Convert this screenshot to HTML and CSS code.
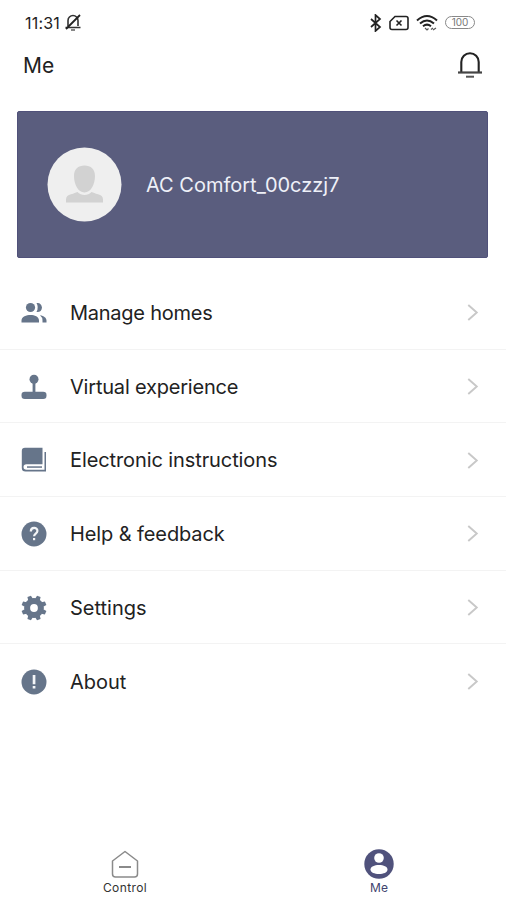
FILE: index.html
```html
<!DOCTYPE html>
<html lang="en">
<head>
<meta charset="utf-8">
<title>Me</title>
<link rel="stylesheet" href="styles.css">
</head>
<body>
<div class="screen">
  <div class="status">
    <span class="time">11:31</span>
    <svg class="mute" width="18" height="20" viewBox="0 0 18 20" fill="none" stroke="#333" stroke-width="1.600"><path d="M4 13V7.500a5 5 0 0 1 10 0V13M1.500 14.500h15" /><path d="M16 2L2 16" stroke="#222" stroke-width="1.800"/><path d="M7 17h4" stroke="#888" stroke-width="2"/></svg>
    <div class="indicators">
      <svg width="12" height="18" viewBox="0 0 12 18" fill="none" stroke="#222" stroke-width="1.700"><path d="M1 5l9 8-4.500 4V1L10 5l-9 8"/></svg>
      <svg width="20" height="16" viewBox="0 0 20 16" fill="none" stroke="#222" stroke-width="1.600"><path d="M6 1.500h11q2 0 2 2v9q0 2-2 2H3q-2 0-2-2V6.500z"/><path d="M7.500 5.500l5 5M12.500 5.500l-5 5"/></svg>
      <svg width="22" height="18" viewBox="0 0 22 18" fill="none" stroke="#222" stroke-width="2"><path d="M1 6.500Q11-2.500 21 6.500M4 9.500Q11 3.500 18 9.500M7 12.200Q11 9 15 12.200"/><path d="M9 14l2 2 1.500-1.500M15 15.500l2-1.500M17 16l3-2" stroke-width="1.200" stroke="#555"/></svg>
      <span class="battery">100</span>
    </div>
  </div>
  <header class="header">
    <h1>Me</h1>
    <svg width="26" height="28" viewBox="0 0 26 28" fill="none"><path d="M4.300 20V10a8.700 8.700 0 0 1 17.400 0v10" stroke="#222" stroke-width="2.100"/><path d="M1 20.500h24" stroke="#444" stroke-width="2.200"/><path d="M9 24.700h8" stroke="#555" stroke-width="2"/></svg>
  </header>
  <section class="profile">
    <svg class="avatar" width="75" height="75" viewBox="0 0 75 75"><circle cx="37.500" cy="37.500" r="37" fill="#efefef"/><path d="M37.500 18.500c6.500 0 10.500 4 10.500 10.500 0 8-4 16.500-10.500 16.500S27 37 27 29c0-6.500 4-10.500 10.500-10.500zM19 55.500v-3c0-3 2-4.500 5-5.300 3-.7 4.500-1.700 6.500-2.200 3.500 4 10.500 4 14 0 2 .5 3.500 1.500 6.500 2.200 3 .8 5 2.300 5 5.300v3z" fill="#d2d2d2"/></svg>
    <span class="name">AC Comfort_00czzj7</span>
  </section>
  <nav class="menu">
    <a class="row"><svg class="icon" viewBox="0 0 26 26"><circle cx="9.500" cy="7.500" r="4.600"/><path d="M.5 22.500v-2c0-4 5-5.600 9-5.600s8.500 1.600 8.500 5.600v2zM15.500 3.100q4.500-1 5.500 4.400-.5 5-5.500 4.500 2.500-4.500 0-8.900zM19 15.200c4 .8 6.500 2.500 6.500 5.300v2h-4v-2q0-3.300-2.500-5.300z"/></svg><span class="label homes">Manage homes</span><svg class="chevron" viewBox="0 0 12 18"><path d="M1 1l9 8-9 8"/></svg></a>
    <a class="row"><svg class="icon" viewBox="0 0 26 26"><circle cx="13" cy="5.300" r="4.500"/><path d="M11.600 8h2.800v11h-2.800z"/><rect x=".5" y="17.800" width="25" height="7.200" rx="3.300"/></svg><span class="label virtual">Virtual experience</span><svg class="chevron" viewBox="0 0 12 18"><path d="M1 1l9 8-9 8"/></svg></a>
    <a class="row"><svg class="icon" viewBox="0 0 26 26"><path d="M4 .8h17.500v16.500H5.500Q2.500 17.300 2.500 20T5.500 22.700h18V5H25v19.500H4.500Q.8 24.500.8 21V4Q.8.800 4 .800z"/><path d="M6 19.300h15v1.500H6z"/></svg><span class="label electronic">Electronic instructions</span><svg class="chevron" viewBox="0 0 12 18"><path d="M1 1l9 8-9 8"/></svg></a>
    <a class="row"><svg class="icon" viewBox="0 0 26 26"><circle cx="13" cy="13" r="12.500"/><path d="M9.800 10.400c0-4.600 6.600-4.600 6.600-.5 0 2.700-3.300 2.600-3.300 5.300" fill="none" stroke="#f4f6f8" stroke-width="2.200"/><path d="M12 17h2.200v2.200H12z" fill="#f4f6f8"/></svg><span class="label help">Help &amp; feedback</span><svg class="chevron" viewBox="0 0 12 18"><path d="M1 1l9 8-9 8"/></svg></a>
    <a class="row"><svg class="icon" viewBox="0 0 26 26"><g transform="rotate(22.500 13 13)"><circle cx="13" cy="13" r="9.900"/><path id="tooth" d="M10.500 4l.6-3.600h3.800l.6 3.600z"/><use href="#tooth" transform="rotate(45 13 13)"/><use href="#tooth" transform="rotate(90 13 13)"/><use href="#tooth" transform="rotate(135 13 13)"/><use href="#tooth" transform="rotate(180 13 13)"/><use href="#tooth" transform="rotate(225 13 13)"/><use href="#tooth" transform="rotate(270 13 13)"/><use href="#tooth" transform="rotate(315 13 13)"/></g><circle cx="13" cy="13" r="3.900" fill="#fff"/></svg><span class="label settings">Settings</span><svg class="chevron" viewBox="0 0 12 18"><path d="M1 1l9 8-9 8"/></svg></a>
    <a class="row"><svg class="icon" viewBox="0 0 26 26"><circle cx="13" cy="13" r="12.500"/><path d="M11.700 6h2.700v9.200h-2.700zM11.700 17h2.700v2.400h-2.700z" fill="#f4f6f8"/></svg><span class="label about">About</span><svg class="chevron" viewBox="0 0 12 18"><path d="M1 1l9 8-9 8"/></svg></a>
  </nav>
  <footer class="tabs">
    <a class="tab"><svg width="30" height="30" viewBox="0 0 30 30" fill="none" stroke="#8a8a8a" stroke-width="1.500" stroke-linejoin="round"><path d="M15 2.500L27.500 12v13q0 3-3 3h-19q-3 0-3-3V12z"/><path d="M9 18h12" stroke-width="2"/></svg><span class="caption">Control</span></a>
    <a class="tab active"><svg width="30" height="30" viewBox="0 0 30 30"><circle cx="15" cy="15" r="14.700" fill="#50527c"/><circle cx="15" cy="9" r="4.800" fill="#fff"/><path d="M6.500 20.500c0-3 4-4.500 8.500-4.500s8.500 1.500 8.500 4.500-4 4.500-8.500 4.500-8.500-1.500-8.500-4.500z" fill="#fff"/></svg><span>Me</span></a>
  </footer>
</div>
</body>
</html>
```
FILE: styles.css
```css
* { box-sizing: border-box; }
body { margin: 0; background: #fff; color: #222; font-family: Inter, "Liberation Sans", sans-serif; }
.screen { width: 506px; height: 900px; display: flex; flex-direction: column; overflow: hidden; }
.status { height: 44px; padding: 1px 31px 0 25px; display: flex; align-items: center; }
.time { font-size: 16px; width: 39px; white-space: nowrap; letter-spacing: 0.2px; }
.indicators { margin-left: auto; display: flex; align-items: center; gap: 7px; }
.battery { width: 30px; height: 13px; border: 1.5px solid #888; border-radius: 7px; font-size: 10px; line-height: 10px; text-align: center; color: #777; }
.header { height: 43px; padding: 0 23px; display: flex; align-items: center; justify-content: space-between; }
h1 { margin: 0; font-size: 21px; font-weight: 400; }
.profile { height: 147px; margin: 24px 18px 0 17px; padding-left: 29px; display: flex; align-items: center; background: #5a5d7e; border: 1px solid #50517a; border-radius: 2px; }
.name { margin-left: 24px; font-size: 20px; color: #eef0f8; white-space: nowrap; }
.menu { margin-top: 18px; }
.row { height: 73.7px; padding: 1px 27px 0 21px; display: flex; align-items: center; border-bottom: 1px solid #f3f3f3; }
.row:last-child { border-bottom: 0; }
.icon { width: 26px; height: 26px; fill: #66758a; flex: none; }
.label { margin-left: 23px; font-size: 20px; white-space: nowrap; }
.homes { letter-spacing: -0.25px; }
.virtual { letter-spacing: -0.2px; }
.electronic, .help { letter-spacing: -0.1px; }
.chevron { margin-left: auto; width: 12px; height: 17px; fill: none; stroke: #c8c8c8; stroke-width: 2; }
.tabs { margin-top: auto; height: 51px; display: flex; }
.tab { flex: 1; display: flex; flex-direction: column; align-items: center; font-size: 12px; line-height: 15px; gap: 1px; padding-right: 4px; color: #333; }
.tab.active { padding: 0 2px 0 0; color: #41446e; }
.caption { letter-spacing: 0.4px; }
```
